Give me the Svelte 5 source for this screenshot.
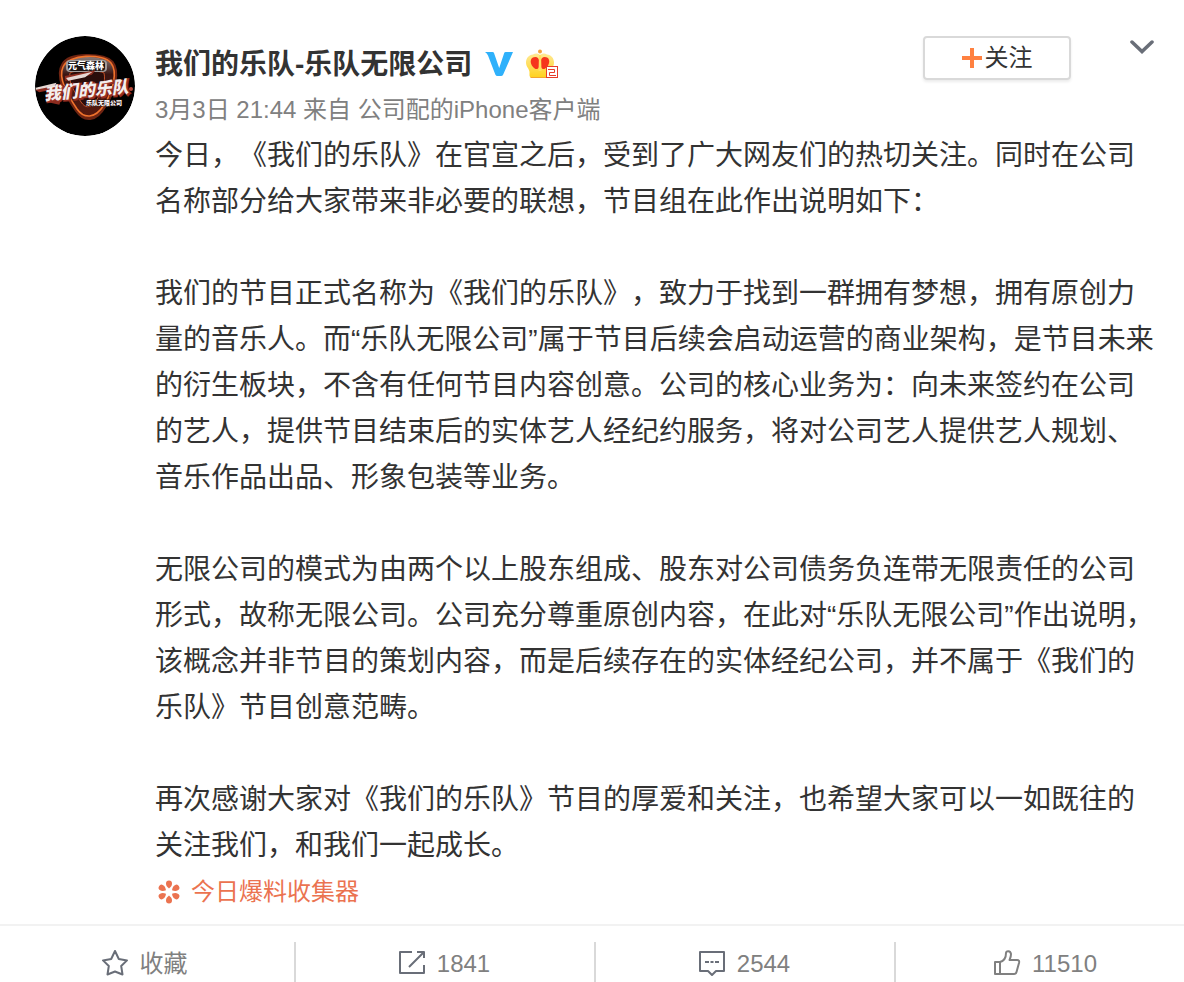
<script lang="ts">
  let following = false;

  const author = '我们的乐队-乐队无限公司';
  const paragraphs = [
    '今日，《我们的乐队》在官宣之后，受到了广大网友们的热切关注。同时在公司名称部分给大家带来非必要的联想，节目组在此作出说明如下：',
    '我们的节目正式名称为《我们的乐队》，致力于找到一群拥有梦想，拥有原创力量的音乐人。而“乐队无限公司”属于节目后续会启动运营的商业架构，是节目未来的衍生板块，不含有任何节目内容创意。公司的核心业务为：向未来签约在公司的艺人，提供节目结束后的实体艺人经纪约服务，将对公司艺人提供艺人规划、音乐作品出品、形象包装等业务。',
    '无限公司的模式为由两个以上股东组成、股东对公司债务负连带无限责任的公司形式，故称无限公司。公司充分尊重原创内容，在此对“乐队无限公司”作出说明，该概念并非节目的策划内容，而是后续存在的实体经纪公司，并不属于《我们的乐队》节目创意范畴。',
    '再次感谢大家对《我们的乐队》节目的厚爱和关注，也希望大家可以一如既往的关注我们，和我们一起成长。'
  ];

  const actions = [
    { icon: 'star', label: '收藏' },
    { icon: 'share', label: '1841' },
    { icon: 'comment', label: '2544' },
    { icon: 'like', label: '11510' }
  ];

  const petals = [0, 60, 120, 180, 240, 300];
</script>

<article class="post">
  <div class="main">
    <a class="avatar" href="#profile" aria-label={author}>
      <svg viewBox="0 0 100 100" width="100" height="100">
        <defs>
          <linearGradient id="pick" x1="0" y1="0" x2="0" y2="1">
            <stop offset="0" stop-color="#8f8480" />
            <stop offset="0.3" stop-color="#3a1512" />
            <stop offset="1" stop-color="#5a1a0e" />
          </linearGradient>
        </defs>
        <circle cx="50" cy="50" r="50" fill="#000" />
        <path
          d="M28 28C34 17 68 17 77 26C85 36 79 56 70 70C61 86 49 86 41 74C31 59 20 40 28 28Z"
          fill="url(#pick)" stroke="#6e2412" stroke-width="3"
        />
        <path
          d="M28 31C33 18 68 17 76 27C83 36 78 55 69 69C60 83 49 83 42 73C32 58 23 42 28 31Z"
          fill="none" stroke="#f0722c" stroke-width="1.6"
        />
        <path d="M35 37C38 34 65 34 69 37C71 45 67 56 61 65C55 73 50 72 46 66C39 55 33 46 35 37Z" fill="#2a0d0b" stroke="#c0512a" stroke-width="1" />
        <rect x="31" y="24" width="41" height="12" rx="4" fill="#a39d9b" />
        <rect x="33" y="25" width="37" height="10" rx="3" fill="#1c1514" />
        <text class="logo" x="51" y="33" font-size="9" text-anchor="middle" fill="#fff">元气森林</text>
        <g transform="rotate(-5 54 52)">
          <path d="M0 49L27 45L31 49L4 52ZM31 38L62 35L58 39L31 43ZM10 62L28 55L23 66Z" fill="#8d2c1f" />
          <text class="logo slant" x="52" y="61" font-size="17" text-anchor="middle" fill="#9d3025" stroke="#8d2c1f" stroke-width="2">我们的乐队</text>
          <text class="logo slant" x="51" y="60" font-size="17" text-anchor="middle" fill="#f3eeee">我们的乐队</text>
          <path d="M1 47L22 44L20 47L1 49ZM32 40L59 36L51 41L34 43Z" fill="#e6d8d4" />
        </g>
        <circle cx="96" cy="53" r="2" fill="#b94839" />
        <text class="logo" x="69" y="69" font-size="6" text-anchor="middle" fill="#fff" stroke="#2a0d0b" stroke-width="1">乐队无限公司</text>
      </svg>
    </a>

    <div class="content">
      <header class="head">
        <a class="name" href="#profile">{author}</a>
        <svg class="verified" viewBox="0 0 28 24" width="28" height="24" aria-hidden="true">
          <path d="M0 0H7.500Q8.700 0 9 1L14.200 16L19.200 1Q19.500 0 20.700 0H28L18.200 22.500Q17.500 24 16 24H12.500Q11 24 10.300 22.500L3 3.500Q2 1 0 0Z" fill="#2fb1fb" />
        </svg>
        <svg class="crown" viewBox="0 0 34 30" width="34" height="30" aria-hidden="true">
          <defs>
            <linearGradient id="gold" x1="0" y1="0" x2="0" y2="1">
              <stop offset="0" stop-color="#ffe995" />
              <stop offset="1" stop-color="#ffd21e" />
            </linearGradient>
          </defs>
          <circle cx="15" cy="2.500" r="2" fill="#f5a33c" />
          <path d="M15 6C17 4 20 4 22 5.500C26 6 29 9 29 13.500C29 18 26 20 26 23V26.500Q26 28.500 24 28.500H6.500Q4.500 28.500 4.500 26.500V23C4.500 20 1 18 1 13.500C1 9 4 6 8 5.500C10 4 13 4 15 6Z" fill="url(#gold)" />
          <path d="M10.500 8C14.500 8 15 14 14 18C13 21 10 20.500 8 18C4 13 5.500 8 10.500 8ZM19.500 8C15.500 8 15 14 16 18C17 21 20 20.500 22 18C26 13 24.500 8 19.500 8Z" fill="#f6351d" />
          <path d="M14 6H16L16.500 22H13.500Z" fill="#ffe063" />
          <path d="M5.500 28.500H21" stroke="#f3a52e" />
          <rect x="21.500" y="17.500" width="11" height="11" fill="#fff" stroke="#e83c2b" />
          <path d="M23 20.500H29.500V23.500H24.500V26.500H31" fill="none" stroke="#e83c2b" />
        </svg>
        <button class="follow" type="button" aria-pressed={following} on:click={() => (following = !following)}>
          <svg viewBox="0 0 20 20" width="20" height="20" aria-hidden="true">
            <path d="M0 10H20M10 0V20" stroke="#ff8140" stroke-width="4" />
          </svg>
          <span>关注</span>
        </button>
        <button class="more" type="button" aria-label="更多">
          <svg viewBox="0 0 24 14" width="24" height="14" aria-hidden="true">
            <path d="M2 2L12 11.500L22 2" fill="none" stroke="#696e78" stroke-width="3.500" stroke-linecap="round" />
          </svg>
        </button>
      </header>

      <div class="meta">
        <time>3月3日 21:44</time> 来自 <span>公司配的iPhone客户端</span>
      </div>

      <div class="text">
        {#each paragraphs as paragraph}
          <p>{paragraph}</p>
        {/each}
      </div>

      <a class="source" href="#collector">
        <svg viewBox="0 0 24 24" width="24" height="24" aria-hidden="true">
          {#each petals as angle}
            <path d="M12 8.500C10 7 9 5.500 9 3.500Q9 0.500 12 0.500Q15 0.500 15 3.500C15 5.500 14 7 12 8.500Z" fill="#eb7350" transform="rotate({angle} 12 12)" />
          {/each}
        </svg>
        <span>今日爆料收集器</span>
      </a>
    </div>
  </div>

  <footer>
    <div class="actions">
      {#each actions as action}
        <button class="action" type="button">
          <svg class={action.icon} viewBox="0 0 28 28" width="28" height="28" aria-hidden="true">
            {#if action.icon === 'star'}
              <path d="M14 1L17.800 9L26 10.400L20.200 16L21.500 24.500L14 21.500L6.500 24.500L7.800 16L2 10.400L10.200 9Z" />
            {:else if action.icon === 'share'}
              <path d="M14 2H2V23H26V15M11 17L25 3M19 2H26V8" />
            {:else if action.icon === 'comment'}
              <path d="M2 2H26V21H18L14 25L10 21H2Z" />
              <path d="M7 12H11M12.500 12H15.500M17 12H21" />
            {:else}
              <path d="M2 12H7V24H2ZM7 12C11 11 13 8 13 3C13 0.500 17.500 0.500 18 4C18 7 17 8.500 16.500 10H24C26 10 26.500 11 26 13L23.500 22Q23 24 21 24H7" />
            {/if}
          </svg>
          <span>{action.label}</span>
        </button>
      {/each}
    </div>
  </footer>
</article>

<style>
  :global(body) {
    margin: 0;
    background: #fff;
  }

  .post {
    overflow: hidden;
    color: #333;
    font-family: 'Liberation Sans', 'Noto Sans CJK SC', sans-serif;
    text-spacing-trim: space-all;
  }

  .main {
    display: flex;
    gap: 20px;
    padding: 36px 28px 9px 35px;
  }

  a {
    color: inherit;
    text-decoration: none;
  }

  button {
    padding: 0;
    border: 0;
    background: none;
    color: inherit;
    font: inherit;
    cursor: pointer;
  }

  svg {
    display: block;
    flex-shrink: 0;
  }

  .avatar {
    flex-shrink: 0;
    width: 100px;
    height: 100px;
    border-radius: 50%;
    overflow: hidden;
  }

  .logo {
    font-weight: 900;
    paint-order: stroke;
  }

  .slant {
    font-style: italic;
  }

  .content {
    flex: 1;
    min-width: 0;
  }

  .head {
    display: flex;
    align-items: center;
    height: 56px;
  }

  .name {
    padding-top: 2px;
    font-size: 28px;
    font-weight: 600;
    line-height: 56px;
    white-space: nowrap;
  }

  .verified {
    margin-left: 13px;
  }

  .crown {
    margin-left: 12px;
  }

  .follow {
    display: flex;
    align-items: center;
    align-self: flex-start;
    justify-content: center;
    gap: 3px;
    box-sizing: border-box;
    width: 148px;
    height: 44px;
    margin-left: auto;
    border: 2px solid #d9d9d9;
    border-radius: 4px;
    box-shadow: 0 2px 3px rgba(0, 0, 0, 0.08);
    font-size: 24px;
    line-height: 40px;
  }

  .more {
    align-self: flex-start;
    margin: 4px 2px 0 59px;
  }

  .meta {
    padding-bottom: 5px;
    color: #808080;
    font-size: 24px;
    line-height: 36px;
  }

  .text {
    font-size: 28px;
    line-height: 46px;
  }

  p {
    margin: 0 0 46px;
  }

  p:last-child {
    margin-bottom: 0;
  }

  .source {
    display: inline-flex;
    align-items: center;
    gap: 10px;
    padding-left: 2px;
    color: #eb7350;
    font-size: 24px;
    line-height: 46px;
    vertical-align: top;
  }

  footer {
    border-top: 2px solid #f2f2f2;
  }

  .actions {
    display: grid;
    grid-template-columns: repeat(4, 1fr);
    margin: 0 -12px 0 -4px;
    padding-top: 16px;
  }

  .action {
    display: flex;
    align-items: center;
    justify-content: center;
    gap: 11px;
    box-sizing: border-box;
    height: 40px;
    padding: 3px 2px 0 0;
    border-right: 2px solid #d9d9d9;
    color: #808080;
    font-size: 24px;
    line-height: 36px;
  }

  .action:last-child {
    border-right: 0;
  }

  .action svg {
    fill: none;
    stroke: #696e78;
    stroke-width: 2;
    stroke-linejoin: round;
  }

  .action .like {
    stroke: #808080;
  }
</style>
